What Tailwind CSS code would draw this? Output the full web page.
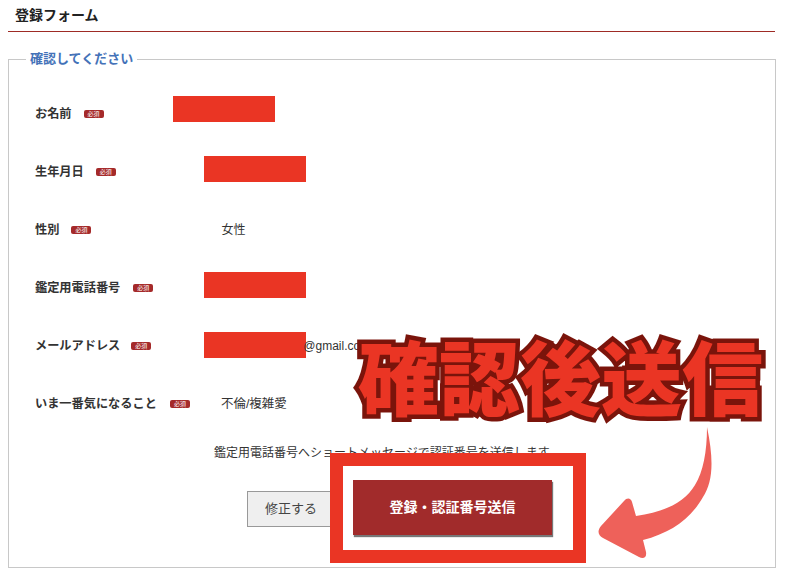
<!DOCTYPE html>
<html lang="ja">
<head>
<meta charset="UTF-8">
<title>登録フォーム</title>
<script src="https://cdn.jsdelivr.net/npm/@tailwindcss/browser@4"></script>
</head>
<body class="bg-white font-['Liberation_Sans','Noto_Sans_CJK_JP',sans-serif] text-[#333] h-[582px] w-[788px] overflow-hidden relative">

<div class="ml-2 pt-[6px] pl-[7px] w-[767px] h-[32px] border-b border-[#9e2b25] text-[14px] font-bold text-[#222] leading-[18px]">登録フォーム</div>

<fieldset class="ml-2 mt-[19px] w-[768px] h-[517px] border border-[#c8c8c8] pl-[26px]">
  <legend class="ml-[-9px] px-[4px] text-[13px] font-bold text-[#4472b8] leading-[16px]">確認してください</legend>

  <div class="mt-[18px] flex flex-col text-[#333]">
    <div class="flex items-center h-[58px]">
      <span class="text-[12.2px] font-bold">お名前</span>
      <span class="ml-3 bg-[#a52a2a] text-white text-[6px] px-1 rounded-[2px] leading-[8px]">必須</span>
      <span class="ml-[69px] w-[102px] h-[26px] bg-[#ea3524] -mt-[10px]"></span>
    </div>
    <div class="flex items-center h-[58px]">
      <span class="text-[12.2px] font-bold">生年月日</span>
      <span class="ml-3 bg-[#a52a2a] text-white text-[6px] px-1 rounded-[2px] leading-[8px]">必須</span>
      <span class="ml-[88px] w-[102px] h-[26px] bg-[#ea3524] -mt-[6px]"></span>
    </div>
    <div class="flex items-center h-[58px]">
      <span class="text-[12.2px] font-bold">性別</span>
      <span class="ml-3 bg-[#a52a2a] text-white text-[6px] px-1 rounded-[2px] leading-[8px]">必須</span>
      <span class="ml-[130px] text-xs">女性</span>
    </div>
    <div class="flex items-center h-[58px]">
      <span class="text-[12.2px] font-bold">鑑定用電話番号</span>
      <span class="ml-[13px] bg-[#a52a2a] text-white text-[6px] px-1 rounded-[2px] leading-[8px]">必須</span>
      <span class="ml-[51px] w-[102px] h-[26px] bg-[#ea3524] -mt-[6px]"></span>
    </div>
    <div class="flex items-center h-[58px]">
      <span class="text-[12.2px] font-bold">メールアドレス</span>
      <span class="ml-[11px] bg-[#a52a2a] text-white text-[6px] px-1 rounded-[2px] leading-[8px]">必須</span>
      <span class="ml-[53px] w-[102px] h-[26px] bg-[#ea3524] -mt-[2px]"></span>
      <span class="text-xs -ml-[3px]">@gmail.com</span>
    </div>
    <div class="flex items-center h-[58px]">
      <span class="text-[12.2px] font-bold">いま一番気になること</span>
      <span class="ml-[13px] bg-[#a52a2a] text-white text-[6px] px-1 rounded-[2px] leading-[8px]">必須</span>
      <span class="ml-[31px] text-[12.5px]">不倫/複雑愛</span>
    </div>
  </div>

  <p class="mt-[12px] ml-[179px] text-xs leading-4">鑑定用電話番号へショートメッセージで認証番号を送信します。</p>

  <div class="mt-[21px] flex ml-[212px] items-center">
    <button class="w-[88px] h-9 bg-[#efefef] border border-[#999] text-[13px] text-[#444]">修正する</button>
    <button class="ml-[18px] -mt-[2px] w-[199px] h-[55px] bg-[#a12b2b] text-white font-bold text-[14px] shadow-[1px_2px_1px_#777]">登録・認証番号送信</button>
  </div>
</fieldset>

<!-- annotations over the screenshot -->
<div class="absolute left-[330px] top-[453px] w-[256px] h-[110px] border-[13px] border-[#ea3524]"></div>
<div class="absolute left-[358px] top-[326px] text-[81px] leading-[96px] font-black whitespace-nowrap font-['Noto_Sans_CJK_JP',sans-serif] text-[#ea3524] [-webkit-text-stroke:9px_#7a140b] [paint-order:stroke_fill]">確認後送信</div>
<svg class="absolute left-[590px] top-[420px]" width="130" height="150" viewBox="0 0 130 150">
  <path d="M117 7C124 40 123 62 113 77C100 100 80 113 53 120L56 132C57 138 53 139 49 137L13 118C8 115 7 111 11 106L34 81C37 77 41 78 42 82L46 96C75 92 95 82 105 65C113 52 117 32 117 7Z" fill="#ee615a"/>
</svg>
</body>
</html>
